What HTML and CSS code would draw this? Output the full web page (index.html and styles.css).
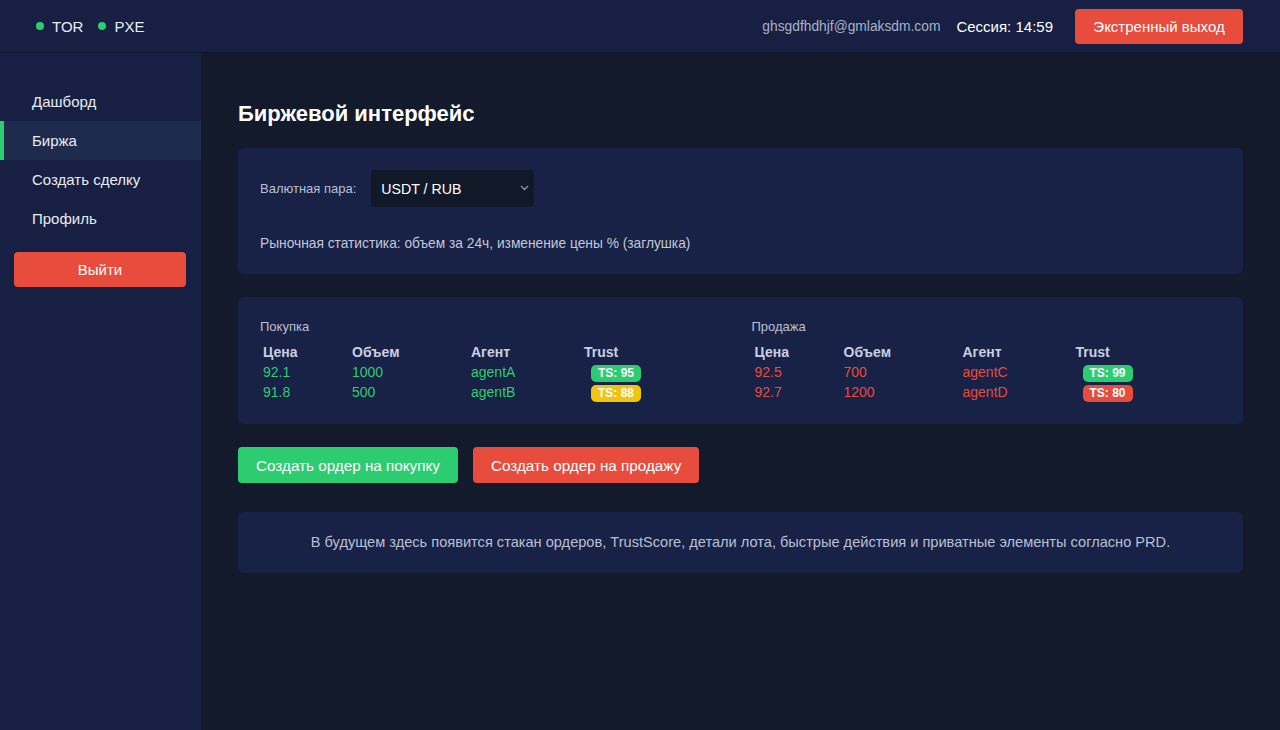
FILE: index.html
```html
<!DOCTYPE html>
<html lang="ru">
<head>
<meta charset="utf-8">
<title>Биржа</title>
<link rel="stylesheet" href="styles.css">
</head>
<body>
<div class="app">
  <header class="topbar">
    <div class="status">
      <span class="stat"><span class="dot"></span>TOR</span>
      <span class="stat"><span class="dot"></span>PXE</span>
    </div>
    <div class="user">
      <span class="email">ghsgdfhdhjf@gmlaksdm.com</span>
      <span class="session">Сессия: 14:59</span>
      <button class="btn btn-red btn-exit">Экстренный выход</button>
    </div>
  </header>
  <div class="body">
    <aside class="sidebar">
      <nav class="nav">
        <a class="nav-item">Дашборд</a>
        <a class="nav-item active">Биржа</a>
        <a class="nav-item">Создать сделку</a>
        <a class="nav-item">Профиль</a>
      </nav>
      <button class="btn btn-red btn-logout">Выйти</button>
    </aside>
    <main class="main">
      <h1 class="title">Биржевой интерфейс</h1>
      <section class="card card-pair">
        <div class="pair-row">
          <span class="label">Валютная пара:</span>
          <div class="select">
            <span>USDT / RUB</span>
            <svg class="chev" width="9" height="6" viewBox="0 0 9 6"><path d="M1 1l3.5 3.5L8 1" fill="none" stroke="#8b93a7" stroke-width="1.3"/></svg>
          </div>
        </div>
        <p class="market">Рыночная статистика: объем за 24ч, изменение цены % (заглушка)</p>
      </section>
      <section class="card card-book">
        <div class="side">
          <div class="side-title">Покупка</div>
          <table class="book buy">
            <thead><tr><th class="c1">Цена</th><th class="c2">Объем</th><th class="c3">Агент</th><th>Trust</th></tr></thead>
            <tbody>
              <tr><td>92.1</td><td>1000</td><td>agentA</td><td><span class="badge green">TS: 95</span></td></tr>
              <tr><td>91.8</td><td>500</td><td>agentB</td><td><span class="badge yellow">TS: 88</span></td></tr>
            </tbody>
          </table>
        </div>
        <div class="side">
          <div class="side-title">Продажа</div>
          <table class="book sell">
            <thead><tr><th class="c1">Цена</th><th class="c2">Объем</th><th class="c3">Агент</th><th>Trust</th></tr></thead>
            <tbody>
              <tr><td>92.5</td><td>700</td><td>agentC</td><td><span class="badge green">TS: 99</span></td></tr>
              <tr><td>92.7</td><td>1200</td><td>agentD</td><td><span class="badge red">TS: 80</span></td></tr>
            </tbody>
          </table>
        </div>
      </section>
      <div class="actions">
        <button class="btn btn-green btn-order">Создать ордер на покупку</button>
        <button class="btn btn-red btn-order">Создать ордер на продажу</button>
      </div>
      <section class="card card-note">
        В будущем здесь появится стакан ордеров, TrustScore, детали лота, быстрые действия и приватные элементы согласно PRD.
      </section>
    </main>
  </div>
</div>
</body>
</html>
```

FILE: styles.css
```css
* { box-sizing: border-box; }
html, body { margin: 0; padding: 0; height: 100%; }
body {
  font-family: "Liberation Sans", Arial, sans-serif;
  background: #121a2c;
  color: #ffffff;
}
.app { display: flex; flex-direction: column; height: 730px; }
.topbar {
  height: 53px;
  flex: none;
  background: #172042;
  border-bottom: 1px solid #0f172b;
  display: flex;
  align-items: center;
  justify-content: space-between;
  padding: 0 37px 0 36px;
}
.status { display: flex; gap: 15px; font-size: 15px; }
.stat { display: flex; align-items: center; gap: 8px; color: #e8ecf5; }
.dot { width: 8px; height: 8px; border-radius: 50%; background: #2ecc71; }
.user { display: flex; align-items: center; }
.email { font-size: 13.8px; color: #a9b2c8; margin-right: 16px; }
.session { font-size: 15px; color: #ffffff; margin-right: 22px; }
.btn {
  border: none;
  border-radius: 4px;
  color: #fff;
  font-family: inherit;
  font-size: 15px;
  cursor: pointer;
}
.btn-red { background: #e74c3c; }
.btn-green { background: #2ecc71; }
.btn-exit { height: 35px; padding: 0 18px; width: 168px; margin-top: 1px; }
.body { flex: 1; display: flex; min-height: 0; }
.sidebar {
  width: 202px;
  flex: none;
  background: #172042;
  border-right: 1px solid #131b34;
  padding-top: 29px;
}
.nav { display: flex; flex-direction: column; }
.nav-item {
  height: 39px;
  line-height: 39px;
  font-size: 15px;
  color: #e8ecf5;
  border-left: 4px solid transparent;
  padding-left: 28px;
}
.nav-item.active { background: #1f2b4d; border-left-color: #2ecc71; }
.btn-logout {
  display: block;
  margin: 14px 0 0 14px;
  width: 172px;
  height: 35px;
}
.main { flex: 1; padding: 47px 37px 0 36px; }
.title {
  margin: 0 0 21px;
  font-size: 22px;
  line-height: 27px;
  font-weight: 700;
}
.card {
  background: #182146;
  border-radius: 6px;
  padding: 22px;
}
.pair-row { display: flex; align-items: center; gap: 15px; }
.label { font-size: 13px; color: #b8c0d4; }
.select {
  width: 163px;
  height: 37px;
  background: #111827;
  border-radius: 3px;
  display: flex;
  align-items: center;
  justify-content: space-between;
  padding: 0 5px 0 10px;
  font-size: 14.2px;
  color: #fff;
}
.chev { margin-top: -2px; }
.market {
  margin: 29px 0 0;
  font-size: 13.75px;
  line-height: 16px;
  color: #c3c9d8;
}
.card-book { margin-top: 23px; display: flex; gap: 22px; }
.side { flex: 1; }
.side-title { font-size: 13px; line-height: 16px; color: #b8c0d4; margin-bottom: 7px; }
.book { border-collapse: collapse; font-size: 14px; }
.book th, .book td { padding: 0 3px; line-height: 20px; height: 20px; text-align: left; }
.book th { font-weight: 700; color: #c9cfe0; }
.book .c1 { width: 89px; }
.book .c2 { width: 119px; }
.book .c3 { width: 113px; }
.buy td { color: #2ecc71; }
.sell td { color: #e74c3c; }
.badge {
  display: inline-block;
  margin-left: 7px;
  width: 50px;
  height: 17px;
  line-height: 17px;
  border-radius: 5px;
  text-align: center;
  font-size: 12px;
  font-weight: 700;
  color: #fff;
  vertical-align: middle;
}
.book td .badge { color: #fff; }
.badge.green { background: #2ecc71; }
.badge.yellow { background: #f1c40f; }
.badge.red { background: #e74c3c; }
.actions { display: flex; gap: 15px; margin-top: 23px; }
.btn-order { height: 36px; padding: 0 18px; font-size: 15.25px; }
.card-note {
  margin-top: 29px;
  text-align: center;
  font-size: 14.6px;
  line-height: 17px;
  color: #b8c0d4;
}
```
